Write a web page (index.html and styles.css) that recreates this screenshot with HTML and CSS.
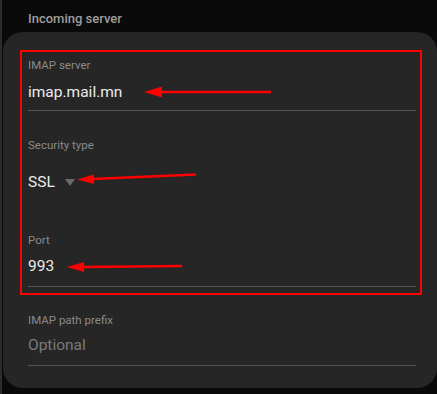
FILE: index.html
```html
<!DOCTYPE html>
<html lang="en">
<head>
    <meta charset="UTF-8">
    <meta name="viewport" content="width=device-width, initial-scale=1.0">
    <title>Incoming server</title>
    <link rel="stylesheet" href="styles.css">
</head>
<body>
    <div class="page">
        <h2 class="section-title">Incoming server</h2>

        <div class="card">
            <div class="highlight">
                <div class="field field-first">
                    <div class="field-label">IMAP server</div>
                    <div class="field-value">imap.mail.mn</div>
                </div>
                <div class="field field-select">
                    <div class="field-label">Security type</div>
                    <div class="field-value select-value">
                        SSL <span class="caret"></span>
                    </div>
                </div>
                <div class="field field-port">
                    <div class="field-label">Port</div>
                    <div class="field-value">993</div>
                </div>
            </div>

            <div class="field field-prefix">
                <div class="field-label">IMAP path prefix</div>
                <div class="field-value placeholder">Optional</div>
            </div>
        </div>

        <!-- annotation arrows -->
        <svg class="arrows" width="437" height="394" viewBox="0 0 437 394">
            <line x1="271" y1="92" x2="160" y2="92" stroke="#ff0000" stroke-width="2.5"/>
            <polygon points="144,92 162,86.5 162,97.5" fill="#ff0000"/>
            <line x1="196" y1="174.5" x2="92" y2="179" stroke="#ff0000" stroke-width="2.5"/>
            <polygon points="77,179.5 94,174.5 94,184" fill="#ff0000"/>
            <line x1="182" y1="266" x2="82" y2="267" stroke="#ff0000" stroke-width="2.5"/>
            <polygon points="67,267 84,262 84,272" fill="#ff0000"/>
        </svg>
    </div>
</body>
</html>
```

FILE: styles.css
```css
html, body {
    margin: 0;
    padding: 0;
    background-color: #0a0a0a;
}
body {
    font-family: Roboto, "Noto Sans", Arial, sans-serif;
    width: 437px;
    height: 394px;
    overflow: hidden;
}
.page {
    position: relative;
    height: 394px;
    border-left: 2px solid #2c2c2c;
    box-sizing: border-box;
}
.section-title {
    margin: 0;
    padding: 11px 0 0 26px;
    height: 32px;
    box-sizing: border-box;
    font-size: 13px;
    line-height: 16px;
    font-weight: 500;
    color: #9d9d9d;
}
.card {
    margin-left: 1px;
    padding: 18px 21px 22px 25px;
    background-color: #262626;
    border-radius: 20px;
}
.highlight {
    margin: 0 -6px 0 -8px;
    padding: 6px 4px 6px 6px;
    border: 2px solid #ff0000;
}
.field-label {
    font-size: 11.5px;
    line-height: 14px;
    color: #8a8a8a;
}
.field-value {
    font-size: 15.5px;
    line-height: 20px;
    color: #ececec;
}
.field-first .field-value {
    margin-top: 10px;
}
.field-first {
    padding-bottom: 8px;
    border-bottom: 1px solid #555;
}
.field-select {
    margin-top: 27px;
}
.select-value {
    margin-top: 20px;
    display: flex;
    align-items: center;
    gap: 10px;
}
.caret {
    width: 0;
    height: 0;
    border-left: 5.5px solid transparent;
    border-right: 5.5px solid transparent;
    border-top: 7px solid #6a6a6a;
}
.field-port {
    margin-top: 41px;
    padding-bottom: 10px;
    border-bottom: 1px solid #555;
}
.field-port .field-value {
    margin-top: 9px;
}
.field-prefix {
    margin-top: 18px;
    padding-bottom: 10px;
    border-bottom: 1px solid #555;
}
.field-prefix .field-value {
    margin-top: 8px;
}
.placeholder {
    color: #7a7a7a;
}
.arrows {
    position: absolute;
    top: 0;
    left: -2px;
    pointer-events: none;
}
```
